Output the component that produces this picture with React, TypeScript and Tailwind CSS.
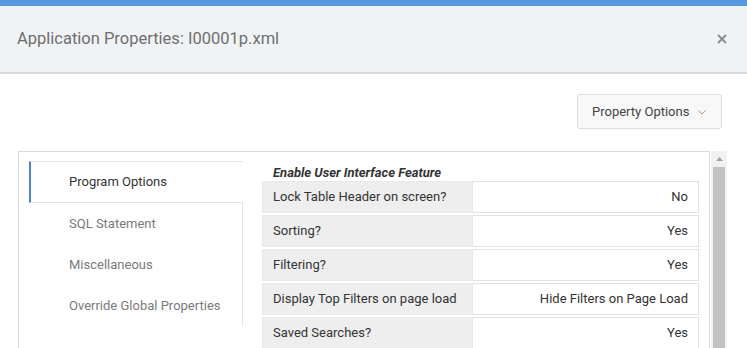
import * as React from 'react';

const navItems = [
  'Program Options',
  'SQL Statement',
  'Miscellaneous',
  'Override Global Properties',
];

const rows: { label: string; value: string }[] = [
  { label: 'Lock Table Header on screen?', value: 'No' },
  { label: 'Sorting?', value: 'Yes' },
  { label: 'Filtering?', value: 'Yes' },
  { label: 'Display Top Filters on page load', value: 'Hide Filters on Page Load' },
  { label: 'Saved Searches?', value: 'Yes' },
];

export default function App() {
  return (
    <div className="h-[348px] w-[747px] overflow-hidden bg-white font-['Roboto',sans-serif]">
      <div className="h-[6px] bg-[#579ae2]" />
      <div className="flex h-[68px] items-center justify-between border-b-2 border-[#dadada] bg-[#f0f3f6] pl-[17px] pr-[20px]">
        <h1 className="text-[16.5px] text-[#6f6f6f]">Application Properties: I00001p.xml</h1>
        <button className="text-[#8a8a8a]" aria-label="Close">
          <svg width="10" height="10" viewBox="0 0 10 10">
            <path d="M1 1L9 9M9 1L1 9" stroke="currentColor" strokeWidth="1.8" />
          </svg>
        </button>
      </div>

      <div className="flex justify-end pr-[25px] pt-[20px]">
        <button className="flex h-[35px] w-[145px] items-center gap-[9px] rounded-[3px] border border-[#dcdcdc] bg-[#f8f8f8] pl-[14px] text-[13px] text-[#444]">
          Property Options
          <svg width="8" height="5" viewBox="0 0 8 5" className="mt-[1px] text-[#999]">
            <path d="M0.5 0.5L4 4L7.5 0.5" fill="none" stroke="currentColor" strokeWidth="1" />
          </svg>
        </button>
      </div>

      <div className="ml-[18px] mt-[22px] flex">
        <div className="flex w-[692px] border-l border-t border-r border-[#d9d9d9] pl-[10px] pr-[10px] pt-[9px]">
          <div className="w-[214px] shrink-0">
            {navItems.map((item, i) =>
              i === 0 ? (
                <div
                  key={item}
                  className="flex h-[42px] items-center border-y border-l-2 border-[#e3e3e3] border-l-[#4a86c8] pl-[38px] text-[13px] text-[#333]"
                >
                  {item}
                </div>
              ) : (
                <div
                  key={item}
                  className="flex h-[41px] items-center border-r border-[#e3e3e3] pl-[40px] text-[13px] text-[#7a7a7a]"
                >
                  {item}
                </div>
              )
            )}
          </div>

          <div className="ml-[19px] flex-1">
            <div className="h-[20px] pl-[11px] pt-[2px] text-[13px] font-bold italic text-[#333]">
              Enable User Interface Feature
            </div>
            <div className="flex flex-col gap-[2px]">
              {rows.map((row) => (
                <div key={row.label} className="flex h-[32px] text-[13px] text-[#333]">
                  <div className="flex w-[211px] items-center border border-[#e8e8e8] bg-[#eeeeee] pl-[10px]">
                    {row.label}
                  </div>
                  <div className="flex flex-1 items-center justify-end border border-l-0 border-[#e3e3e3] pr-[10px]">
                    {row.value}
                  </div>
                </div>
              ))}
            </div>
          </div>
        </div>

        <div className="ml-[1px] flex h-[200px] w-[16px] flex-col bg-[#f1f1f1]">
          <div className="flex h-[16px] items-center justify-center">
            <svg width="7" height="4" viewBox="0 0 7 4">
              <path d="M0 4L3.5 0L7 4Z" fill="#a3a3a3" />
            </svg>
          </div>
          <div className="mx-[2px] flex-1 bg-[#c1c1c1]" />
        </div>
      </div>
    </div>
  );
}
